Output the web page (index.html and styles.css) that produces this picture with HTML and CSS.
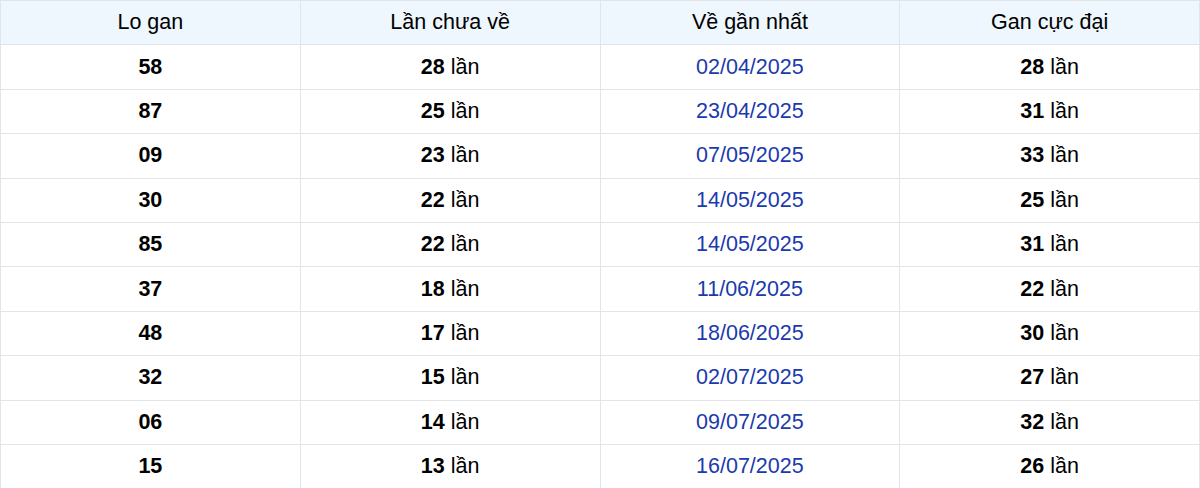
FILE: index.html
```html
<!DOCTYPE html>
<html lang="vi">
<head>
<meta charset="utf-8">
<link rel="stylesheet" href="styles.css">
</head>
<body>
<table class="gan">
<thead>
<tr><th>Lo gan</th><th>Lần chưa về</th><th>Về gần nhất</th><th>Gan cực đại</th></tr>
</thead>
<tbody>
<tr><td><b>58</b></td><td><b>28</b> lần</td><td class="date">02/04/2025</td><td><b>28</b> lần</td></tr>
<tr><td><b>87</b></td><td><b>25</b> lần</td><td class="date">23/04/2025</td><td><b>31</b> lần</td></tr>
<tr><td><b>09</b></td><td><b>23</b> lần</td><td class="date">07/05/2025</td><td><b>33</b> lần</td></tr>
<tr><td><b>30</b></td><td><b>22</b> lần</td><td class="date">14/05/2025</td><td><b>25</b> lần</td></tr>
<tr><td><b>85</b></td><td><b>22</b> lần</td><td class="date">14/05/2025</td><td><b>31</b> lần</td></tr>
<tr><td><b>37</b></td><td><b>18</b> lần</td><td class="date">11/06/2025</td><td><b>22</b> lần</td></tr>
<tr><td><b>48</b></td><td><b>17</b> lần</td><td class="date">18/06/2025</td><td><b>30</b> lần</td></tr>
<tr><td><b>32</b></td><td><b>15</b> lần</td><td class="date">02/07/2025</td><td><b>27</b> lần</td></tr>
<tr><td><b>06</b></td><td><b>14</b> lần</td><td class="date">09/07/2025</td><td><b>32</b> lần</td></tr>
<tr><td><b>15</b></td><td><b>13</b> lần</td><td class="date">16/07/2025</td><td><b>26</b> lần</td></tr>
</tbody>
</table>
</body>
</html>
```
FILE: styles.css
```css
html, body {
  margin: 0;
  padding: 0;
  background: #ffffff;
}
body {
  font-family: "Liberation Sans", Arial, sans-serif;
  color: #000000;
}
.gan {
  width: 1200px;
  border-collapse: collapse;
  table-layout: fixed;
  font-size: 21.5px;
}
.gan th, .gan td {
  border: 1px solid #e2e4e8;
  text-align: center;
  vertical-align: middle;
  height: 44.4px;
  padding: 0;
  box-sizing: border-box;
}
.gan th {
  background: #eef6fe;
  font-weight: normal;
  color: #000000;
}
.gan td b {
  font-weight: bold;
}
.gan td.date {
  color: #1a3aad;
}
```
